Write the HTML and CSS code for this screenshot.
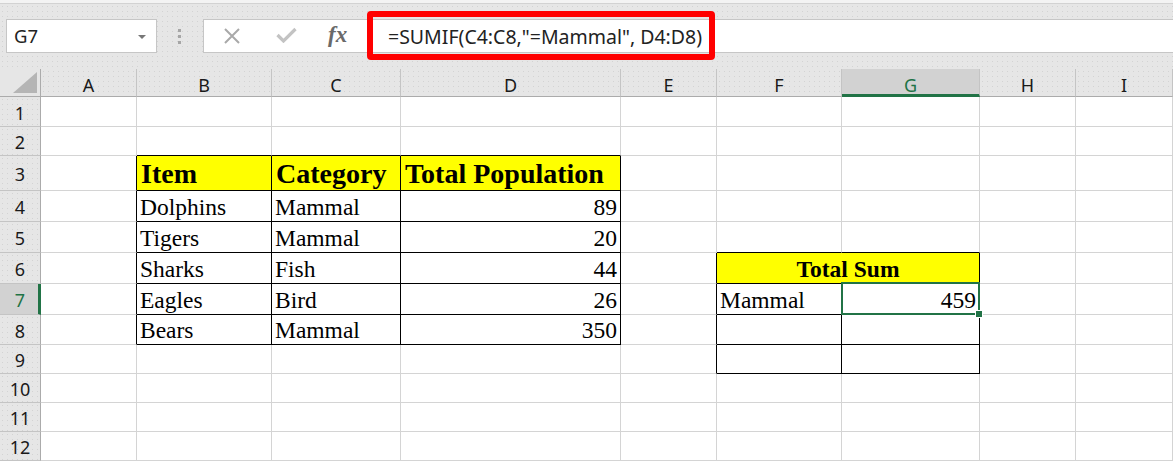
FILE: index.html
```html
<!DOCTYPE html>
<html>
<head>
<meta charset="utf-8">
<link rel="stylesheet" href="styles.css">
</head>
<body>
<div class="app">
  <div class="edge"></div>
  <div class="fbar">
    <div class="namebox"><span class="ref">G7</span><span class="caret"></span></div>
    <div class="grip"><i></i><i></i><i></i></div>
    <div class="finput">
      <div class="fbtns">
        <svg class="ic-x" width="18" height="16" viewBox="0 0 18 16"><path d="M2 1 L16 15 M16 1 L2 15" stroke="#a9a9a9" stroke-width="2" fill="none"/></svg>
        <svg class="ic-ok" width="21" height="16" viewBox="0 0 21 16"><path d="M1.5 8 L7.5 14 L19.5 2" stroke="#c3c3c3" stroke-width="3.2" fill="none"/></svg>
        <span class="fx">fx</span>
      </div>
      <span class="ftext">=SUMIF(C4:C8,"=Mammal", D4:D8)</span>
    </div>
    <div class="hl"></div>
  </div>
  <div class="sheet">
    <div class="corner"><svg width="24" height="21" viewBox="0 0 24 21"><polygon points="24,0 24,21 0,21" fill="#b5b5b5"/></svg></div>
    <div class="ch">A</div><div class="ch">B</div><div class="ch">C</div><div class="ch">D</div><div class="ch">E</div><div class="ch">F</div><div class="ch sel">G</div><div class="ch">H</div><div class="ch">I</div>

    <div class="rh">1</div><div class="c"></div><div class="c"></div><div class="c"></div><div class="c"></div><div class="c"></div><div class="c"></div><div class="c"></div><div class="c"></div><div class="c"></div>

    <div class="rh">2</div><div class="c"></div><div class="c kb"></div><div class="c kb"></div><div class="c kb"></div><div class="c"></div><div class="c"></div><div class="c"></div><div class="c"></div><div class="c"></div>

    <div class="rh">3</div><div class="c kr"></div><div class="c k y b">Item</div><div class="c k y b">Category</div><div class="c k y b">Total Population</div><div class="c"></div><div class="c"></div><div class="c"></div><div class="c"></div><div class="c"></div>

    <div class="rh">4</div><div class="c kr"></div><div class="c k">Dolphins</div><div class="c k">Mammal</div><div class="c k n">89</div><div class="c"></div><div class="c"></div><div class="c"></div><div class="c"></div><div class="c"></div>

    <div class="rh">5</div><div class="c kr"></div><div class="c k">Tigers</div><div class="c k">Mammal</div><div class="c k n">20</div><div class="c"></div><div class="c kb"></div><div class="c kb"></div><div class="c"></div><div class="c"></div>

    <div class="rh">6</div><div class="c kr"></div><div class="c k">Sharks</div><div class="c k">Fish</div><div class="c k n">44</div><div class="c kr"></div><div class="c k y b2 merged">Total Sum</div><div class="c"></div><div class="c"></div>

    <div class="rh sel">7</div><div class="c kr"></div><div class="c k">Eagles</div><div class="c k">Bird</div><div class="c k n">26</div><div class="c kr"></div><div class="c k">Mammal</div><div class="c k n active">459<div class="selbox"><span class="handle"></span></div></div><div class="c"></div><div class="c"></div>

    <div class="rh">8</div><div class="c kr"></div><div class="c k">Bears</div><div class="c k">Mammal</div><div class="c k n">350</div><div class="c kr"></div><div class="c k"></div><div class="c k"></div><div class="c"></div><div class="c"></div>

    <div class="rh">9</div><div class="c"></div><div class="c"></div><div class="c"></div><div class="c"></div><div class="c kr"></div><div class="c k"></div><div class="c k"></div><div class="c"></div><div class="c"></div>

    <div class="rh">10</div><div class="c"></div><div class="c"></div><div class="c"></div><div class="c"></div><div class="c"></div><div class="c"></div><div class="c"></div><div class="c"></div><div class="c"></div>

    <div class="rh">11</div><div class="c"></div><div class="c"></div><div class="c"></div><div class="c"></div><div class="c"></div><div class="c"></div><div class="c"></div><div class="c"></div><div class="c"></div>

    <div class="rh">12</div><div class="c"></div><div class="c"></div><div class="c"></div><div class="c"></div><div class="c"></div><div class="c"></div><div class="c"></div><div class="c"></div><div class="c"></div>
  </div>
</div>
</body>
</html>
```

FILE: styles.css
```css
* { box-sizing: border-box; }
html, body { margin: 0; padding: 0; }
body {
  width: 1173px;
  height: 461px;
  overflow: hidden;
  background: #e6e6e6;
  font-family: "Noto Sans", "Open Sans", sans-serif;
}
.app { width: 1173px; height: 461px; }

.edge {
  height: 4px;
  background: #f3f3f3;
  border-bottom: 1px solid #d2d2d2;
}

.fbar {
  position: relative;
  height: 65px;
  padding-top: 15px;
  display: flex;
  align-items: flex-start;
  background-color: #e6e6e6;
  background-image: radial-gradient(circle, #d3d3d3 0.6px, transparent 0.9px);
  background-size: 5px 5px;
}

.namebox {
  margin-left: 6px;
  width: 151px;
  height: 34px;
  background: #fff;
  border: 1px solid #c6c6c6;
  display: flex;
  align-items: center;
  justify-content: space-between;
  padding: 0 10px 0 7px;
}
.ref { font-size: 18.5px; color: #222; line-height: 1; padding-top: 1px; }
.caret {
  width: 0; height: 0;
  border-left: 4px solid transparent;
  border-right: 4px solid transparent;
  border-top: 4px solid #777;
  margin-top: 2px;
}

.grip {
  margin-left: 21px;
  width: 3px;
  height: 34px;
  display: flex;
  flex-direction: column;
  justify-content: center;
  gap: 3px;
}
.grip i { display: block; width: 3px; height: 3px; background: #a6a6a6; }

.finput {
  margin-left: 22px;
  flex: 1;
  height: 34px;
  background: #fff;
  border: 1px solid #c6c6c6;
  border-right: none;
  display: flex;
  align-items: center;
}
.fbtns {
  display: flex;
  align-items: center;
  padding-left: 19px;
  width: 184px;
  height: 100%;
}
.ic-x { margin-right: 35px; }
.ic-ok { margin-right: 31px; margin-top: -2px; }
.fx {
  font-family: "Liberation Serif", serif;
  font-style: italic;
  font-weight: bold;
  font-size: 23px;
  color: #6a6a6a;
  line-height: 1;
  margin-top: -3px;
}
.ftext {
  font-size: 19.5px;
  color: #222;
  line-height: 1;
  white-space: nowrap;
  padding-top: 1px;
}

.hl {
  position: absolute;
  left: 367px;
  top: 7px;
  width: 348px;
  height: 49px;
  border: 6px solid #ff0000;
  border-radius: 4px;
}

.sheet {
  position: relative;
  display: grid;
  grid-template-columns: 41px 96px 135px 129px 220px 96px 125px 138px 96px 97px;
  grid-template-rows: 28px 30px 29px 35px 31px 31px 31px 31px 30px 29px 29px 29px 29px;
  background: #fff;
}

.corner {
  background-color: #e6e6e6;
  border-right: 1px solid #ababab;
  border-bottom: 1px solid #ababab;
  display: flex;
  align-items: flex-end;
  justify-content: flex-end;
  padding: 0 3px 3px 0;
}
.ch, .rh {
  background-color: #e6e6e6;
  background-image: radial-gradient(circle, #d3d3d3 0.6px, transparent 0.9px);
  background-size: 5px 5px;
  font-size: 18px;
  color: #1a1a1a;
  display: flex;
  align-items: center;
  justify-content: center;
  line-height: 1;
}
.ch {
  border-right: 1px solid #c4c4c4;
  border-bottom: 1px solid #ababab;
  padding-top: 5px;
}
.ch.sel {
  background: #d2d2d2;
  color: #217346;
  border-bottom: 3px solid #217346;
  padding-top: 7px;
}
.rh {
  border-right: 1px solid #ababab;
  border-bottom: 1px solid #c4c4c4;
  padding-top: 2px;
}
.rh.sel {
  background: #d2d2d2;
  color: #217346;
  border-right: 3px solid #217346;
  padding-left: 2px;
}

.c {
  border-right: 1px solid #d4d4d4;
  border-bottom: 1px solid #d4d4d4;
  font-family: "Liberation Serif", "Times New Roman", serif;
  font-size: 23.5px;
  color: #000;
  display: flex;
  align-items: flex-end;
  padding: 0 3px 0 3px;
  line-height: 1.15;
  white-space: nowrap;
}
.k { border-right-color: #000; border-bottom-color: #000; }
.kr { border-right-color: #000; }
.kb { border-bottom-color: #000; }
.y { background: #ffff00; }
.b { font-weight: bold; font-size: 28px; padding-left: 4px; line-height: 1.1; }
.b2 { font-weight: bold; }
.n { justify-content: flex-end; }
.merged { grid-column: span 2; justify-content: center; }

.active { position: relative; }
.selbox {
  position: absolute;
  left: -1px;
  top: -2px;
  right: -1px;
  bottom: -1px;
  border: 2px solid #217346;
}
.handle {
  position: absolute;
  right: -4px;
  bottom: -4px;
  width: 6px;
  height: 6px;
  background: #217346;
  outline: 1px solid #fff;
}
```
